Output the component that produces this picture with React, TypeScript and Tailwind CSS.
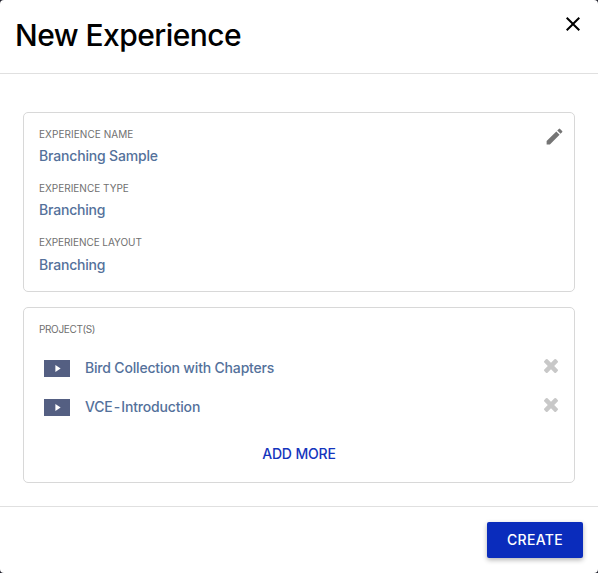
import { MdClose, MdEdit } from "react-icons/md";

function Field({ label, value, labelClass, valueClass }: { label: string; value: string; labelClass: string; valueClass: string }) {
  return (
    <div className="h-[54px]">
      <div className={`h-[14px] whitespace-nowrap text-[10px] leading-[14px] text-[#707070] ${labelClass}`}>{label}</div>
      <div className={`mt-[5px] whitespace-nowrap text-[14px] leading-[20px] font-[450] text-[#54719b] ${valueClass}`}>{value}</div>
    </div>
  );
}

function RemoveIcon() {
  return (
    <svg viewBox="302 366 1188 1188" className="size-[14px] fill-[#c8c8c8]">
      <path d="M1490 1322q0 40-28 68l-136 136q-28 28-68 28t-68-28l-294-294-294 294q-28 28-68 28t-68-28l-136-136q-28-28-28-68t28-68l294-294-294-294q-28-28-28-68t28-68l136-136q28-28 68-28t68 28l294 294 294-294q28-28 68-28t68 28l136 136q28 28 28 68t-28 68l-294 294 294 294q28 28 28 68z" />
    </svg>
  );
}

function Project({ name, nameClass }: { name: string; nameClass: string }) {
  return (
    <div className="flex h-[39px] items-center pl-[5px]">
      <div className="flex h-[17px] w-[26px] items-center justify-center bg-[#545f82] pl-[2px]">
        <svg viewBox="0 0 6 8" className="h-[7px] w-[6px] fill-white">
          <path d="M0 0l6 4-6 4z" />
        </svg>
      </div>
      <span className={`-mt-[2px] ml-[15px] whitespace-nowrap text-[14px] leading-[20px] font-[450] text-[#54719b] ${nameClass}`}>{name}</span>
      <button className="mr-px -mt-[5px] ml-auto" aria-label="Remove">
        <RemoveIcon />
      </button>
    </div>
  );
}

export default function App() {
  return (
    <div className="h-[573px] w-[598px] overflow-hidden bg-[#20202c] font-['Inter',sans-serif]">
      <div className="flex h-full flex-col rounded-[4px] bg-white">
        <header className="flex h-[74px] shrink-0 justify-between border-b border-[#e0e0e0] pr-[13px] pl-[15px]">
          <h1 className="mt-[15px] whitespace-nowrap text-[30px] leading-[40px] font-[450] tracking-[-0.55px] text-black">New Experience</h1>
          <button className="mt-[12px] h-[24px]" aria-label="Close">
            <MdClose className="size-[24px] text-black" />
          </button>
        </header>
        <main className="flex flex-1 flex-col gap-[15px] px-[23px] pt-[38px]">
          <section className="flex h-[180px] justify-between rounded-[5px] border border-[#d8d8d8] pt-[14px] pr-[9px] pl-[15px]">
            <div>
              <Field label="EXPERIENCE NAME" value="Branching Sample" labelClass="tracking-[0.06px]" valueClass="tracking-[-0.17px]" />
              <Field label="EXPERIENCE TYPE" value="Branching" labelClass="" valueClass="tracking-[-0.19px]" />
              <Field label="EXPERIENCE LAYOUT" value="Branching" labelClass="tracking-[-0.06px]" valueClass="pt-px tracking-[-0.19px]" />
            </div>
            <MdEdit className="-mt-px size-[21px] text-[#757575]" />
          </section>
          <section className="flex h-[176px] flex-col rounded-[5px] border border-[#d8d8d8] px-[15px] pt-[14px]">
            <div className="text-[10px] leading-[14px] tracking-[-0.35px] text-[#707070]">PROJECT(S)</div>
            <div className="mt-[13px]">
              <Project name="Bird Collection with Chapters" nameClass="tracking-[-0.18px]" />
              <Project name="VCE - Introduction" nameClass="tracking-[-0.17px] [word-spacing:-2.4px]" />
            </div>
            <button className="mt-[17px] self-center text-[14px] leading-[20px] font-medium tracking-[-0.15px] text-[#1435bd]">ADD MORE</button>
          </section>
        </main>
        <footer className="flex h-[67px] shrink-0 justify-end border-t border-[#e0e0e0] pt-[15px] pr-[15px]">
          <button className="h-[36px] w-[96px] rounded-[2px] bg-[#0a2cbc] pb-[2px] text-[14px] font-medium tracking-[0.35px] text-white shadow-[0_2px_5px_rgba(0,0,0,0.3)]">
            CREATE
          </button>
        </footer>
      </div>
    </div>
  );
}
